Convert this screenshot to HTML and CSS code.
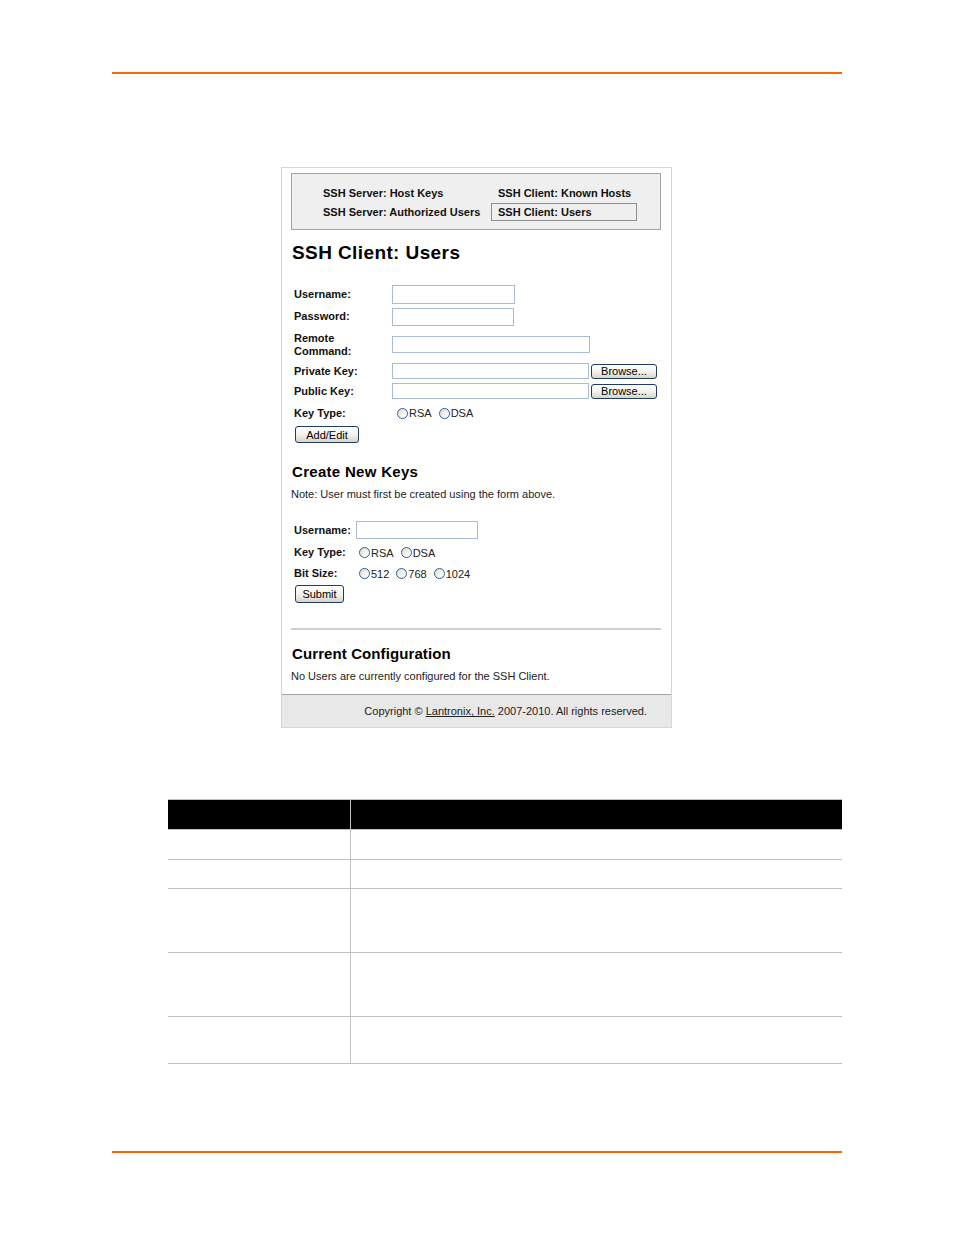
FILE: index.html
```html
<!DOCTYPE html>
<html>
<head>
<meta charset="utf-8">
<title>SSH Client: Users</title>
<link rel="stylesheet" href="styles.css">
</head>
<body>
<div class="page">
  <div class="rule"></div>

  <div class="shot">
    <div class="shot-body">
      <div class="nav">
        <span class="nav-item">SSH Server: Host Keys</span>
        <span class="nav-item col2">SSH Client: Known Hosts</span>
        <span class="nav-item">SSH Server: Authorized Users</span>
        <span class="nav-item col2 active">SSH Client: Users</span>
      </div>

      <h1 class="title">SSH Client: Users</h1>

      <div class="form">
        <div class="frow h22"><span class="lbl">Username:</span><input class="txt w123 t19" type="text"></div>
        <div class="frow h23"><span class="lbl">Password:</span><input class="txt w122 t18" type="password"></div>
        <div class="frow h33"><span class="lbl">Remote<br>Command:</span><input class="txt w198 t17" type="text"></div>
        <div class="frow h20"><span class="lbl">Private Key:</span><input class="txt w197 t16" type="text"><button class="btn browse" type="button">Browse...</button></div>
        <div class="frow h20"><span class="lbl">Public Key:</span><input class="txt w197 t16" type="text"><button class="btn browse" type="button">Browse...</button></div>
        <div class="frow h24"><span class="lbl">Key Type:</span>
          <span class="opts first"><label class="opt"><input class="radio" type="radio" name="kt1">RSA</label><label class="opt"><input class="radio" type="radio" name="kt1">DSA</label></span>
        </div>
        <button class="btn addedit" type="button">Add/Edit</button>
      </div>

      <h2 class="sub first-sub">Create New Keys</h2>
      <p class="note">Note: User must first be created using the form above.</p>

      <div class="form form2">
        <div class="frow h22"><span class="lbl lbl2">Username:</span><input class="txt w122 t18" type="text"></div>
        <div class="frow h23"><span class="lbl lbl2">Key Type:</span>
          <span class="opts"><label class="opt"><input class="radio" type="radio" name="kt2">RSA</label><label class="opt"><input class="radio" type="radio" name="kt2">DSA</label></span>
        </div>
        <div class="frow h19"><span class="lbl lbl2">Bit Size:</span>
          <span class="opts"><label class="opt"><input class="radio" type="radio" name="bs">512</label><label class="opt"><input class="radio" type="radio" name="bs">768</label><label class="opt"><input class="radio" type="radio" name="bs">1024</label></span>
        </div>
        <button class="btn submit" type="button">Submit</button>
      </div>

      <div class="hr"></div>

      <h2 class="sub cfg-sub">Current Configuration</h2>
      <p class="note">No Users are currently configured for the SSH Client.</p>
    </div>
    <div class="shot-foot">Copyright &copy;&nbsp;<a class="link" href="#">Lantronix, Inc.</a>&nbsp;2007-2010. All rights reserved.</div>
  </div>

  <div class="params">
    <div class="cell head c1"></div><div class="cell head"></div>
    <div class="cell c1 r29"></div><div class="cell r29"></div>
    <div class="cell c1 r28"></div><div class="cell r28"></div>
    <div class="cell c1 r63"></div><div class="cell r63"></div>
    <div class="cell c1 r63"></div><div class="cell r63"></div>
    <div class="cell c1 r46"></div><div class="cell r46"></div>
  </div>

  <div class="rule bottom"></div>
</div>
</body>
</html>
```

FILE: styles.css
```css
* { box-sizing: border-box; }

body {
  margin: 0;
  background: #fff;
  color: #000;
  font-family: "Liberation Sans", Arial, sans-serif;
}

.page {
  width: 730px;
  margin-left: 112px;
  padding-top: 72px;
}

.rule {
  height: 2px;
  background: #ff6600;
}

.rule.bottom {
  margin-top: 87px;
}

/* screenshot frame */
.shot {
  margin: 93px 0 0 169px;
  width: 391px;
  border: 1px solid #d6d6d6;
}

.shot-body {
  padding: 5px 10px 11px 9px;
}

.nav {
  display: grid;
  grid-template-columns: 168px 146px;
  grid-auto-rows: 18px;
  row-gap: 1px;
  padding: 10px 0 8px 31px;
  border: 1px solid #a3a3a3;
  background: #efefef;
  font-size: 11px;
  font-weight: bold;
  color: #111;
}

.nav-item {
  display: flex;
  align-items: center;
  white-space: nowrap;
}

.col2 { padding-left: 7px; }

.active {
  border: 1px solid #8c8c8c;
  padding-left: 6px;
}

.title {
  margin: 11px 0 0 1px;
  font-size: 19px;
  line-height: 24px;
  font-weight: bold;
  letter-spacing: 0.4px;
}

.form {
  margin: 18px 0 0 3px;
  font-size: 11px;
}

.form2 { margin-top: 18px; }

.frow {
  display: flex;
  align-items: center;
}

.h19 { height: 19px; }
.h20 { height: 20px; }
.h22 { height: 22px; }
.h23 { height: 23px; }
.h24 { height: 24px; }
.h33 { height: 33px; }

.lbl {
  flex: none;
  width: 98px;
  font-weight: bold;
  line-height: 13px;
  color: #111;
}

.lbl2 { width: 62px; }

.txt {
  margin: 0;
  padding: 0;
  border: 1px solid #a7bcd4;
  background: #fff;
}

.w122 { width: 122px; }
.w123 { width: 123px; }
.w197 { width: 197px; }
.w198 { width: 198px; }
.t16 { height: 16px; }
.t17 { height: 17px; }
.t18 { height: 18px; }
.t19 { height: 19px; }

.btn {
  margin: 0;
  padding: 0;
  font-family: "Liberation Sans", Arial, sans-serif;
  font-size: 11px;
  color: #000;
  border: 1px solid #1f3b66;
  border-radius: 3px;
  background: linear-gradient(#ffffff, #f2f1ea 55%, #d6d3c6);
}

.browse {
  width: 66px;
  height: 15px;
  margin-left: 2px;
  line-height: 12px;
}

.addedit {
  display: block;
  width: 64px;
  height: 17px;
  margin: 1px 0 0 1px;
}

.submit {
  display: block;
  width: 49px;
  height: 18px;
  margin: 2px 0 0 1px;
}

.opts {
  display: flex;
  align-items: center;
  margin-left: 3px;
}

.opts.first { margin-left: 5px; }

.opt {
  display: inline-flex;
  align-items: center;
  margin-right: 7px;
  color: #222;
}

.radio {
  appearance: none;
  -webkit-appearance: none;
  width: 11px;
  height: 11px;
  margin: 0 1px 0 0;
  border: 1px solid #2f5f8e;
  border-radius: 50%;
  background: linear-gradient(135deg, #d8d8d2, #ffffff 80%);
}

.sub {
  margin: 20px 0 0 1px;
  font-size: 15px;
  line-height: 18px;
  font-weight: bold;
  letter-spacing: 0.3px;
}

.cfg-sub { margin-top: 15px; letter-spacing: 0.1px; }

.note {
  margin: 7px 0 0;
  font-size: 11px;
  line-height: 13px;
  color: #222;
}

.hr {
  height: 2px;
  margin-top: 25px;
  background: #d2cfc6;
}

.shot-foot {
  height: 33px;
  display: flex;
  align-items: center;
  justify-content: flex-end;
  padding-right: 24px;
  border-top: 1px solid #a2a2a2;
  background: #e8e8e8;
  font-size: 11px;
  color: #222;
}

.link {
  color: #222;
  text-decoration: underline;
}

/* parameter table */
.params {
  display: grid;
  grid-template-columns: 183px 1fr;
  width: 674px;
  margin: 71px 0 0 56px;
}

.cell {
  border-bottom: 1px solid #c0c0c0;
}

.c1 { border-right: 1px solid #c0c0c0; }

.head {
  height: 31px;
  background: #000;
  border-top: 1px solid #c0c0c0;
}

.r28 { height: 29px; }
.r29 { height: 30px; }
.r46 { height: 47px; }
.r63 { height: 64px; }
```
